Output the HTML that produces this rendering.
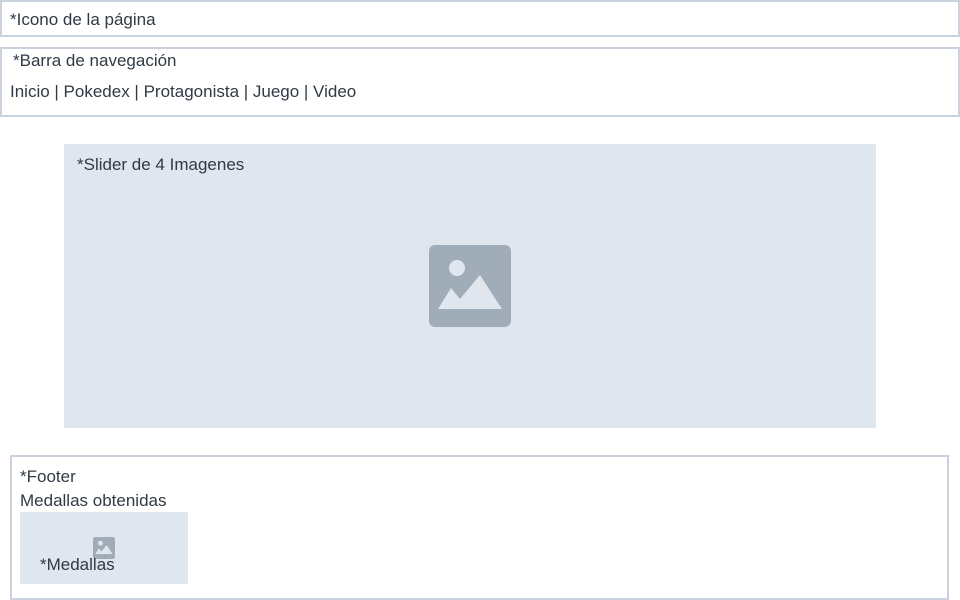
<!DOCTYPE html>
<html><head><style>
body{margin:0;width:960px;height:600px;background:#fff;font-family:"Liberation Sans",sans-serif;font-size:17px;color:#2f3a45;position:relative;overflow:hidden}
.b{position:absolute;border:2px solid #c9d2dd;box-sizing:border-box}
.t{position:absolute;white-space:nowrap;line-height:20px}
</style></head><body>
<div class="b" style="left:0;top:0;width:960px;height:37px"></div>
<div class="t" style="left:10px;top:10px">*Icono de la página</div>
<div class="b" style="left:0;top:47px;width:960px;height:70px"></div>
<div class="t" style="left:13px;top:51px">*Barra de navegación</div>
<div class="t" style="left:10px;top:82px">Inicio | Pokedex | Protagonista | Juego | Video</div>
<div style="position:absolute;left:64px;top:144px;width:812px;height:284px;background:#e0e6ee"></div>
<div class="t" style="left:77px;top:155px">*Slider de 4 Imagenes</div>
<svg style="position:absolute;left:429px;top:245px" width="82" height="82" viewBox="0 0 82 82">
<rect width="82" height="82" rx="6" fill="#a0adb8"/>
<circle cx="28" cy="23" r="8" fill="#e0e6ee"/>
<path d="M9 64 L22 43 L31 54 L51 30 L73 64 Z" fill="#e0e6ee"/>
</svg>
<div class="b" style="left:10px;top:455px;width:939px;height:145px"></div>
<div class="t" style="left:20px;top:467px">*Footer</div>
<div class="t" style="left:20px;top:491px">Medallas obtenidas</div>
<div style="position:absolute;left:20px;top:512px;width:168px;height:72px;background:#e0e6ee"></div>
<svg style="position:absolute;left:93px;top:537px" width="22" height="22" viewBox="0 0 82 82">
<rect width="82" height="82" rx="8" fill="#a0adb8"/>
<circle cx="28" cy="23" r="9" fill="#e0e6ee"/>
<path d="M9 64 L22 43 L31 54 L51 30 L73 64 Z" fill="#e0e6ee"/>
</svg>
<div class="t" style="left:40px;top:555px">*Medallas</div>
</body></html>
